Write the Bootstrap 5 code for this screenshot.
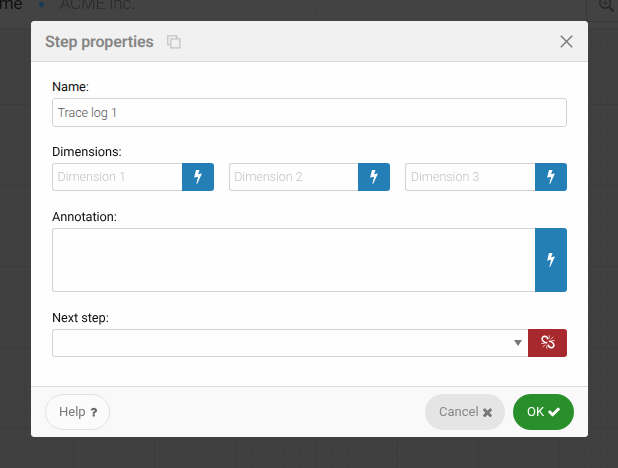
<!DOCTYPE html>
<html lang="en">
<head>
<meta charset="utf-8">
<meta name="viewport" content="width=device-width, initial-scale=1">
<title>Step properties</title>
<link href="https://cdn.jsdelivr.net/npm/bootstrap@5.3.0/dist/css/bootstrap.min.css" rel="stylesheet">
<style>
body{font-family:Roboto,"Liberation Sans",sans-serif;font-size:13px;line-height:18px;text-rendering:geometricPrecision;color:#111;height:468px;overflow:hidden;background:#404040}
.workspace{position:fixed;inset:0;background-color:#404040;
background-image:linear-gradient(#3b3b3b 1px,transparent 1px),linear-gradient(90deg,#3b3b3b 1px,transparent 1px),linear-gradient(#3d3d3d 1px,transparent 1px),linear-gradient(90deg,#3d3d3d 1px,transparent 1px);
background-size:81px 81px,81px 81px,16.2px 16.2px,16.2px 16.2px;background-position:0 23px,73px 0,0 6.8px,8.2px 0}
.topbar{height:29px;background:rgba(68,68,68,.75);border-bottom:1px solid #3b3b3b}
.crumbs{font-size:17px;line-height:20px;margin-top:-6px;letter-spacing:0;color:#111}
.crumbs .lead-word{margin-left:-11px}
.crumbs .dot{width:5px;height:5px;background:#163b55;margin:0 16px 0 16px}
.crumbs .org{color:#292929;font-weight:300;letter-spacing:-.15px}
.zoombox{width:32px;height:22px;border-left:1px solid #383838;border-bottom:1px solid #383838}
.zoombox svg{margin:-4px 0 0 11px}
.dialog{width:557px;height:416px;margin:21px 0 0 31px;border-radius:4px;background:#fefefe;overflow:hidden;z-index:1}
.dialog-head{height:41px;background:#f1f1f1;border-bottom:1px solid #d9d9d9;padding:0 15px 0 14px}
.dialog-head h1{font-size:16px;line-height:20px;font-weight:600;letter-spacing:-.12px;color:#868686;width:109px;white-space:nowrap;margin:1px 13px 0 0}
.dialog-body{padding:16px 21px 0}
.dialog-foot{height:51px;background:#f9f9f9;border-top:1px solid #d9d9d9;padding:0 14px}
label{display:block;height:20px;padding-top:1px;font-size:12.800px;letter-spacing:-.08px}
.field{margin-bottom:16px}
.field-loose{margin-bottom:17px}
.form-control{font-size:12.600px;line-height:18px;font-weight:300;height:29px;padding:0 5px 1px 4.500px;letter-spacing:-.05px;border-color:#d3d3d3;border-radius:3px;color:#555;background:#fefefe}
.form-control::placeholder{color:#c3c3c3;opacity:1}
.dims{gap:15px}
.dims .form-control,.combo .form-control{height:28px}
.input-group>.btn{width:32px;border:0;border-radius:0 3px 3px 0;padding:0 0 1px;background:#257fb7}
.input-group>.form-control{border-right-color:#cbd3d8}
.input-group>.btn.unlink{width:39px;padding:0 0 2px;background:#a8292d}
textarea.form-control{height:64px;resize:none}
.arrow{right:45px;top:11px;width:8px;height:6px;z-index:6}
.pill{height:36px;border-radius:18px;font-size:13px;line-height:18px;padding:0 0 0 13px;border:1px solid transparent;gap:4px}
.pill-help{width:65px;color:#777;background:#fbfbfb;border-color:#e2e2e2}
.pill-cancel{width:80px;color:#888;background:#e5e5e5}
.pill-ok{width:61px;color:#fff;background:#288f2a}
svg{display:block;flex:none}
</style>
<script src="https://cdn.jsdelivr.net/npm/bootstrap@5.3.0/dist/js/bootstrap.bundle.min.js"></script>
</head>
<body>
<svg width="0" height="0" class="position-absolute">
<symbol id="bolt" viewBox="448 128 896 1664"><path d="M1333 566q18 20 7 44l-540 1157q-13 25-42 25-4 0-14-2-17-5-25.500-19t-4.500-30l197-808-406 101q-4 1-12 1-18 0-31-11-18-15-13-39l201-825q4-16 18-26.500t32-10.500h328q19 0 32 12.500t13 29.500q0 8-5 18l-171 463 396-98q8-2 12-2 19 0 34 15z"/></symbol>
</svg>
<div class="workspace">
<div class="topbar d-flex justify-content-between align-items-start">
<div class="crumbs d-flex align-items-center"><span class="lead-word">ome</span><span class="dot rounded-circle"></span><span class="org">ACME Inc.</span></div>
<div class="zoombox d-flex"><svg width="17" height="17" viewBox="0 0 16 16" fill="none" stroke="#292929"><circle cx="6.700" cy="6.500" r="5" stroke-width="1.500"/><path d="M10.500 10.300l4 4" stroke-width="2.200"/><path d="M4.200 6.500h5M6.700 4v5"/></svg></div>
</div>
</div>
<div class="dialog position-relative d-flex flex-column" role="dialog">
<div class="dialog-head d-flex align-items-center">
<h1>Step properties</h1>
<svg style="margin-top:1px" width="14" height="14" viewBox="0 0 14 14" fill="none" stroke="#c3c3c3" stroke-width="1.300"><path d="M3.700 9.700H.800V.800h9v2.700"/><path d="M3.900 3.900h9v9h-9z"/></svg>
<svg class="ms-auto" width="13" height="13" viewBox="0 0 13 13" stroke="#777" stroke-width="1.400"><path d="M.8.800l11.400 11.400M12.200.800L.800 12.200"/></svg>
</div>
<div class="dialog-body flex-grow-1">
<div class="field"><label for="name">Name:</label><input id="name" class="form-control" value="Trace log 1"></div>
<div class="field-loose"><label>Dimensions:</label>
<div class="dims d-flex">
<div class="input-group"><input class="form-control" placeholder="Dimension 1"><button class="btn d-flex align-items-center justify-content-center"><svg width="8" height="14" fill="#fff"><use href="#bolt"/></svg></button></div>
<div class="input-group"><input class="form-control" placeholder="Dimension 2"><button class="btn d-flex align-items-center justify-content-center"><svg width="8" height="14" fill="#fff"><use href="#bolt"/></svg></button></div>
<div class="input-group"><input class="form-control" placeholder="Dimension 3"><button class="btn d-flex align-items-center justify-content-center"><svg width="8" height="14" fill="#fff"><use href="#bolt"/></svg></button></div>
</div></div>
<div class="field-loose"><label>Annotation:</label>
<div class="input-group"><textarea class="form-control"></textarea><button class="btn d-flex align-items-center justify-content-center"><svg width="8" height="14" fill="#fff"><use href="#bolt"/></svg></button></div></div>
<div><label>Next step:</label>
<div class="input-group combo"><input class="form-control"><svg class="arrow position-absolute" viewBox="0 0 8 6" fill="#777"><path d="M0 0h8L4 6z"/></svg><button class="btn unlink d-flex align-items-center justify-content-center"><svg width="14" height="14" viewBox="0 0 14 14" fill="none" stroke="#fff"><path d="M6.800 4.300Q6.300 1.200 3.800 1.200Q1.200 1.500 1.100 4Q1.300 6 3 6.900Q4.700 8.100 6.200 7.500M7.200 9.700Q7.700 12.800 10.200 12.800Q12.800 12.500 12.900 10Q12.700 8 11 7.100Q9.300 5.900 7.800 6.500" stroke-width="1.600"/><path d="M8.300 3.600V.300M9.800 4.300l2.500-2.500M10.500 5.500h3.200M5.700 10.400v3.300M4.200 9.700l-2.500 2.500M3.500 8.500H.300" stroke-width=".7"/></svg></button></div></div>
</div>
<div class="dialog-foot d-flex align-items-center">
<button class="btn pill pill-help d-flex align-items-center me-auto"><span>Help</span><svg width="7" height="10" viewBox="380 230 1024 1310" fill="#666"><path d="M1088 1256v240q0 16-12 28t-28 12h-240q-16 0-28-12t-12-28v-240q0-16 12-28t28-12h240q16 0 28 12t12 28zm316-600q0 54-15.500 101t-35 76.500-55 59.500-57.500 43.500-61 35.500q-41 23-68.500 65t-27.500 67q0 17-12 32.500t-28 15.500h-240q-15 0-25.500-18.500t-10.500-37.500v-45q0-83 65-156.500t143-108.500q59-27 84-56t25-76q0-42-46.500-74t-107.500-32q-65 0-108 29-35 25-107 115-13 16-31 16-12 0-25-8l-164-125q-13-10-15.500-25t5.500-28q160-266 464-266 80 0 161 31t146 83 106 127.500 41 158.500z"/></svg></button>
<button class="btn pill pill-cancel d-flex align-items-center me-2"><span>Cancel</span><svg width="9" height="9" viewBox="300 330 1190 1190" fill="#777"><path d="M1490 1322q0 40-28 68l-136 136q-28 28-68 28t-68-28l-294-294-294 294q-28 28-68 28t-68-28l-136-136q-28-28-28-68t28-68l294-294-294-294q-28-28-28-68t28-68l136-136q28-28 68-28t68 28l294 294 294-294q28-28 68-28t68 28l136 136q28 28 28 68t-28 68l-294 294 294 294q28 28 28 68z"/></svg></button>
<button class="btn pill pill-ok d-flex align-items-center"><span>OK</span><svg width="12" height="10" viewBox="110 320 1570 1210" fill="#fff"><path d="M1671 566q0 40-28 68l-724 724-136 136q-28 28-68 28t-68-28l-136-136-362-362q-28-28-28-68t28-68l136-136q28-28 68-28t68 28l294 295 656-657q28-28 68-28t68 28l136 136q28 28 28 68z"/></svg></button>
</div>
</div>
</body>
</html>
